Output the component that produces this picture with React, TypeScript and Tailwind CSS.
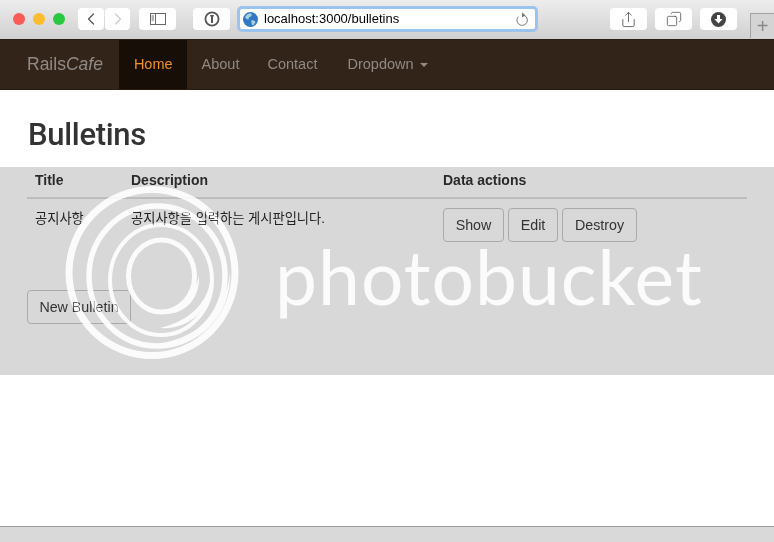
import { ChevronLeft, ChevronRight, Share, Copy } from 'lucide-react'

const sans = 'font-["Liberation_Sans",Arial,"Noto_Sans_CJK_KR",sans-serif]'

const ToolButton = ({ className, children }: { className: string; children: React.ReactNode }) => (
  <div className={`flex h-[22px] items-center justify-center rounded-[4px] bg-white ${className}`}>{children}</div>
)

const TableButton = ({ className, label }: { className: string; label: string }) => (
  <button className={`h-[34px] rounded-[4px] border border-[#a9a9a9] pt-[1px] text-[14.25px] text-[#333] ${className}`}>{label}</button>
)

const Toolbar = () => (
  <div className="flex h-[39px] items-center bg-gradient-to-b from-[#ededed] to-[#d0d0d0] pb-[1px]">
    <div className="ml-[13px] flex gap-[8px]">
      <span className="size-[12px] rounded-full bg-[#fc5b57]" />
      <span className="size-[12px] rounded-full bg-[#fdbb2e]" />
      <span className="size-[12px] rounded-full bg-[#2ac83f]" />
    </div>
    <div className="ml-[13px] flex gap-[1px]">
      <ToolButton className="w-[26px]"><ChevronLeft size={20} strokeWidth={1.5} className="text-[#555]" /></ToolButton>
      <ToolButton className="w-[25px]"><ChevronRight size={20} strokeWidth={1.5} className="text-[#ccc]" /></ToolButton>
    </div>
    <ToolButton className="ml-[9px] w-[37px]">
      <svg width="16" height="12" viewBox="0 0 16 12" fill="none" stroke="#666" strokeWidth="1">
        <rect x="0.5" y="0.5" width="15" height="11" />
        <path d="M5.5 0.5v11M1.5 3h2.5M1.5 5h2.5M1.5 7h2.5" />
      </svg>
    </ToolButton>
    <ToolButton className="ml-[17px] w-[37px]">
      <svg width="16" height="16" viewBox="0 0 16 16" fill="none">
        <circle cx="8" cy="8" r="6.6" stroke="#555" strokeWidth="1.8" />
        <rect x="7" y="4" width="2" height="8" fill="#555" />
        <rect x="6.2" y="4" width="3.6" height="1.5" fill="#555" />
      </svg>
    </ToolButton>
    <div className={`ml-[7px] flex h-[26px] w-[301px] items-center rounded-[5px] border-[3px] border-[#9cc2ee] bg-white pl-[3px] pr-[6px] ${sans}`}>
      <svg width="15" height="15" viewBox="0 0 15 15">
        <circle cx="7.5" cy="7.5" r="7.5" fill="#2f79c4" />
        <path d="M4 2.5l3-1.2 2 1-1 2.2-2 .8-.5 2.2-2-.5-1.5-2zM8.5 8l3 .7 1 1.6-2 3-1.5-.3-.7-3z" fill="#a9cfe0" />
      </svg>
      <span className="ml-[6px] text-[13px] text-black">localhost:3000/bulletins</span>
      <svg className="ml-auto" width="14" height="15" viewBox="0 0 14 15" fill="none">
        <path d="M8.6 3.2A5.2 5.2 0 1 1 3.4 4.6" stroke="#777" strokeWidth="1" />
        <path d="M7 0.6l3.6 2.6L7 5.6z" fill="#777" />
      </svg>
    </div>
    <div className="ml-[72px] flex gap-[8px]">
      <ToolButton className="w-[37px]"><Share size={17} strokeWidth={1.2} className="text-[#555]" /></ToolButton>
      <ToolButton className="w-[37px]"><Copy size={16} strokeWidth={1.2} className="-scale-x-100 text-[#555]" /></ToolButton>
      <ToolButton className="w-[37px]">
        <svg width="15" height="15" viewBox="0 0 15 15">
          <circle cx="7.5" cy="7.5" r="7.5" fill="#444" />
          <path d="M6 3h3v4h2.6l-4.1 4.6L3.400 7H6z" fill="#fff" />
        </svg>
      </ToolButton>
    </div>
    <div className="ml-auto flex h-[25px] w-[24px] items-center justify-center self-end border-l border-t border-[#a3a3a3] bg-[#d4d4d4] text-[20px] leading-none font-light text-[#8a8a8a]">+</div>
  </div>
)

const Navbar = () => (
  <nav className={`flex h-[51px] items-stretch border-t border-b border-[#2a1d12] bg-[#33241a] pl-[27px] text-[14.5px] text-[#8f8a85] ${sans}`}>
    <span className="mr-[16px] flex items-center text-[17.5px]">Rails<em>Cafe</em></span>
    <a className="flex items-center bg-[#160e07] pl-[15px] pr-[14px] text-[#f0921e]">Home</a>
    <a className="flex items-center pl-[15px] pr-[14px]">About</a>
    <a className="flex items-center pl-[14px] pr-[15px]">Contact</a>
    <a className="flex items-center pl-[15px]">
      Dropdown
      <span className="ml-[6px] mt-[1px] border-x-[4px] border-t-[4px] border-x-transparent border-t-[#8f8a85]" />
    </a>
  </nav>
)

// photobucket stamp, blended so dark text still shows through it
const Watermark = () => (
  <div className="pointer-events-none absolute left-0 top-0 h-[542px] w-[774px] overflow-hidden opacity-90 mix-blend-overlay">
    <svg className="absolute left-[55px] top-[180px]" width="195" height="185" viewBox="55 180 195 185" fill="none" stroke="white">
      <circle cx="152" cy="272.500" r="83" strokeWidth="7" />
      <ellipse cx="157" cy="276" rx="68" ry="70" strokeWidth="5.500" />
      <ellipse cx="161" cy="280" rx="51" ry="55" strokeWidth="4" />
      <ellipse cx="161.500" cy="276" rx="33" ry="36" strokeWidth="5" />
      <path d="M140 346C190 356 232 322 230 272C226 318 190 344 140 346Z" fill="white" stroke="none" />
      <path d="M160 328C190 330 212 308 210 282C206 306 186 322 160 328Z" fill="white" stroke="none" />
      <path d="M165 314C186 314 200 298 199 276C194 296 182 308 165 314Z" fill="white" stroke="none" />
    </svg>
    <span className='absolute left-[275px] top-[226px] font-["Lato",sans-serif] text-[75px] leading-[100px] font-normal tracking-[1px] text-white'>
      photobucket
    </span>
  </div>
)

export default function App() {
  return (
    <div className={`relative flex h-[542px] w-[774px] flex-col overflow-hidden bg-white ${sans}`}>
      <Toolbar />
      <Navbar />
      <h1 className='ml-[28px] mt-[27px] h-[50px] font-["Roboto",sans-serif] text-[31px] leading-[36px] font-medium tracking-[-0.3px] text-[#333]'>Bulletins</h1>
      <div className="h-[208px] bg-[#d8d8d8] px-[27px]">
        <div className="grid h-[32px] grid-cols-[96px_312px_1fr] items-start border-b-2 border-[#bdbdbd] pl-[8px] pt-[5px] text-[14px] font-bold leading-[16px] text-[#2a2a2a]">
          <span>Title</span>
          <span>Description</span>
          <span>Data actions</span>
        </div>
        <div className="grid h-[91px] grid-cols-[96px_312px_1fr] items-start pl-[8px] text-[13.25px] text-[#222]">
          <span className="pt-[10px]">공지사항</span>
          <span className="pt-[10px]">공지사항을 입력하는 게시판입니다.</span>
          <div className="flex gap-[4px] pt-[9px]">
            <TableButton className="w-[61px]" label="Show" />
            <TableButton className="w-[50px]" label="Edit" />
            <TableButton className="w-[75px]" label="Destroy" />
          </div>
        </div>
        <TableButton className="w-[104px]" label="New Bulletin" />
      </div>
      <div className="mt-auto h-[16px] border-t border-[#9c9c9c] bg-[#d9d9d9]" />
      <Watermark />
    </div>
  )
}
